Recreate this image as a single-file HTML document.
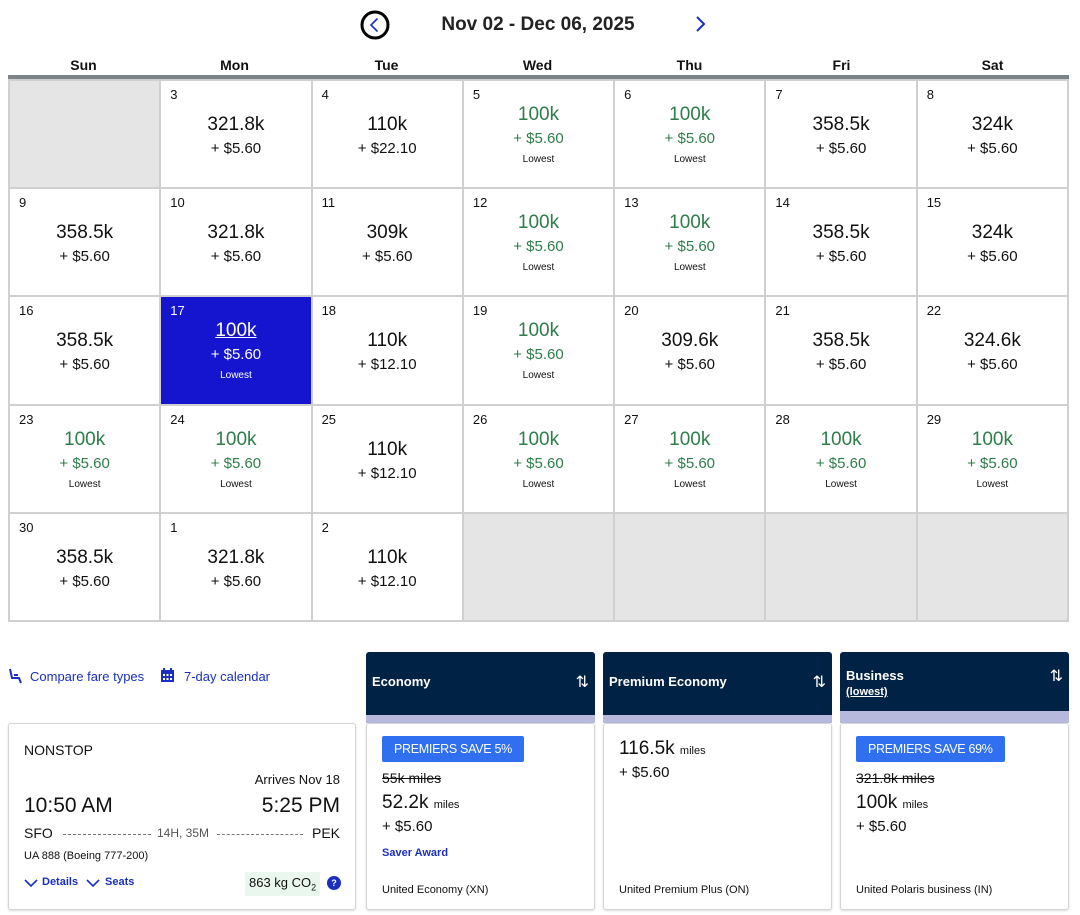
<!DOCTYPE html>
<html><head><meta charset="utf-8"><style>
*{box-sizing:border-box;margin:0;padding:0}
body{width:1080px;height:915px;background:#fff;font-family:"Liberation Sans",sans-serif;color:#111;position:relative;overflow:hidden}
.abs{position:absolute}
.title{left:0;width:1080px;top:14px;text-align:center;font-size:19px;font-weight:bold;color:#222}
.dow{top:57px;font-size:14px;font-weight:bold;text-align:center;width:151px}
.bar{left:8px;top:75px;width:1061px;height:4px;background:#7d8387}
.grid{left:8px;top:79px;width:1061px;height:543px;background:#d0d0d0;display:grid;grid-template-columns:repeat(7,1fr);grid-template-rows:repeat(5,1fr);gap:2px;padding:2px}
.c{background:#fff;position:relative;text-align:center}
.c.e{background:#e5e5e5}
.d{position:absolute;left:9px;top:6px;font-size:13px}
.p{position:absolute;left:0;right:0;top:33px;font-size:19px}
.f{position:absolute;left:0;right:0;top:59px;font-size:15px}
.g .p{top:23px;color:#2e7d4b}
.g .f{top:49px;color:#2e7d4b}
.l{position:absolute;left:0;right:0;top:73px;font-size:10px}
.s{background:#1515cf;color:#fff}
.s .p{color:#fff;text-decoration:underline}.s .f{color:#fff}
.link{top:669px;font-size:13px;color:#1a2fc2}
.card{border:1px solid #d5d5d5;border-radius:3px;box-shadow:0 1px 2px rgba(0,0,0,.15)}
.hd{background:#002244;color:#fff;font-weight:bold;font-size:13px;border-radius:3px 3px 0 0}
.band{background:#b7b9dc}
.badge{background:#2f6ff0;color:#fff;font-size:12.5px;padding:6px 12px;display:inline-block;border-radius:2px;letter-spacing:-0.3px}
.sm{font-size:11px}
</style></head><body>
<svg class="abs" style="left:359px;top:9px" width="32" height="32" viewBox="0 0 32 32"><circle cx="16" cy="16" r="13" fill="none" stroke="#000" stroke-width="3"/><path d="M18.5 9.5 L12 16 L18.5 22.5" fill="none" stroke="#1a2fc2" stroke-width="1.6"/></svg>
<div class="abs title" style="left:-2px">Nov 02 - Dec 06, 2025</div>
<svg class="abs" style="left:694px;top:15px" width="14" height="18" viewBox="0 0 14 18"><path d="M3 2 L10 9 L3 16" fill="none" stroke="#1a2fc2" stroke-width="2"/></svg>
<div class="abs dow" style="left:8px">Sun</div><div class="abs dow" style="left:159px">Mon</div><div class="abs dow" style="left:311px">Tue</div><div class="abs dow" style="left:462px">Wed</div><div class="abs dow" style="left:614px">Thu</div><div class="abs dow" style="left:766px">Fri</div><div class="abs dow" style="left:917px">Sat</div>
<div class="abs bar"></div>
<div class="abs grid">
<div class="c e"></div>
<div class="c"><span class="d">3</span><div class="p">321.8k</div><div class="f">+ $5.60</div></div>
<div class="c"><span class="d">4</span><div class="p">110k</div><div class="f">+ $22.10</div></div>
<div class="c g"><span class="d">5</span><div class="p">100k</div><div class="f">+ $5.60</div><div class="l">Lowest</div></div>
<div class="c g"><span class="d">6</span><div class="p">100k</div><div class="f">+ $5.60</div><div class="l">Lowest</div></div>
<div class="c"><span class="d">7</span><div class="p">358.5k</div><div class="f">+ $5.60</div></div>
<div class="c"><span class="d">8</span><div class="p">324k</div><div class="f">+ $5.60</div></div>
<div class="c"><span class="d">9</span><div class="p">358.5k</div><div class="f">+ $5.60</div></div>
<div class="c"><span class="d">10</span><div class="p">321.8k</div><div class="f">+ $5.60</div></div>
<div class="c"><span class="d">11</span><div class="p">309k</div><div class="f">+ $5.60</div></div>
<div class="c g"><span class="d">12</span><div class="p">100k</div><div class="f">+ $5.60</div><div class="l">Lowest</div></div>
<div class="c g"><span class="d">13</span><div class="p">100k</div><div class="f">+ $5.60</div><div class="l">Lowest</div></div>
<div class="c"><span class="d">14</span><div class="p">358.5k</div><div class="f">+ $5.60</div></div>
<div class="c"><span class="d">15</span><div class="p">324k</div><div class="f">+ $5.60</div></div>
<div class="c"><span class="d">16</span><div class="p">358.5k</div><div class="f">+ $5.60</div></div>
<div class="c g s"><span class="d">17</span><div class="p">100k</div><div class="f">+ $5.60</div><div class="l">Lowest</div></div>
<div class="c"><span class="d">18</span><div class="p">110k</div><div class="f">+ $12.10</div></div>
<div class="c g"><span class="d">19</span><div class="p">100k</div><div class="f">+ $5.60</div><div class="l">Lowest</div></div>
<div class="c"><span class="d">20</span><div class="p">309.6k</div><div class="f">+ $5.60</div></div>
<div class="c"><span class="d">21</span><div class="p">358.5k</div><div class="f">+ $5.60</div></div>
<div class="c"><span class="d">22</span><div class="p">324.6k</div><div class="f">+ $5.60</div></div>
<div class="c g"><span class="d">23</span><div class="p">100k</div><div class="f">+ $5.60</div><div class="l">Lowest</div></div>
<div class="c g"><span class="d">24</span><div class="p">100k</div><div class="f">+ $5.60</div><div class="l">Lowest</div></div>
<div class="c"><span class="d">25</span><div class="p">110k</div><div class="f">+ $12.10</div></div>
<div class="c g"><span class="d">26</span><div class="p">100k</div><div class="f">+ $5.60</div><div class="l">Lowest</div></div>
<div class="c g"><span class="d">27</span><div class="p">100k</div><div class="f">+ $5.60</div><div class="l">Lowest</div></div>
<div class="c g"><span class="d">28</span><div class="p">100k</div><div class="f">+ $5.60</div><div class="l">Lowest</div></div>
<div class="c g"><span class="d">29</span><div class="p">100k</div><div class="f">+ $5.60</div><div class="l">Lowest</div></div>
<div class="c"><span class="d">30</span><div class="p">358.5k</div><div class="f">+ $5.60</div></div>
<div class="c"><span class="d">1</span><div class="p">321.8k</div><div class="f">+ $5.60</div></div>
<div class="c"><span class="d">2</span><div class="p">110k</div><div class="f">+ $12.10</div></div>
<div class="c e"></div><div class="c e"></div><div class="c e"></div><div class="c e"></div>
</div>

<svg class="abs" style="left:7px;top:668px" width="16" height="16" viewBox="0 0 16 16"><path d="M3 1 L5 10 L12 10 L14 15 M7 7 L11 7" fill="none" stroke="#1a2fc2" stroke-width="2"/></svg>
<div class="abs link" style="left:30px">Compare fare types</div>
<svg class="abs" style="left:160px;top:667px" width="15" height="16" viewBox="0 0 15 16"><rect x="1" y="3" width="13" height="12" fill="#1a2fc2"/><rect x="3" y="1" width="2" height="3" fill="#1a2fc2"/><rect x="10" y="1" width="2" height="3" fill="#1a2fc2"/><g fill="#fff"><rect x="3" y="7" width="2" height="2"/><rect x="6.5" y="7" width="2" height="2"/><rect x="10" y="7" width="2" height="2"/><rect x="3" y="11" width="2" height="2"/><rect x="6.5" y="11" width="2" height="2"/><rect x="10" y="11" width="2" height="2"/></g></svg>
<div class="abs link" style="left:184px">7-day calendar</div>

<div class="abs card" style="left:8px;top:723px;width:348px;height:187px">
<div class="abs" style="left:15px;top:18px;font-size:14px">NONSTOP</div>
<div class="abs" style="right:15px;top:48px;font-size:13px">Arrives Nov 18</div>
<div class="abs" style="left:15px;top:70px;font-size:21px">10:50 AM</div>
<div class="abs" style="right:15px;top:70px;font-size:21px">5:25 PM</div>
<div class="abs" style="left:15px;top:101px;font-size:14px">SFO</div>
<div class="abs" style="left:54px;top:110px;width:88px;border-top:1px dashed #777"></div>
<div class="abs" style="left:148px;top:102px;font-size:12px;color:#555">14H, 35M</div>
<div class="abs" style="left:208px;top:110px;width:86px;border-top:1px dashed #777"></div>
<div class="abs" style="right:15px;top:101px;font-size:14px">PEK</div>
<div class="abs" style="left:15px;top:126px;font-size:11px">UA 888 (Boeing 777-200)</div>
<svg class="abs" style="left:15px;top:154px" width="14" height="10" viewBox="0 0 14 10"><path d="M1 2 L7 8 L13 2" fill="none" stroke="#1a2fc2" stroke-width="1.6"/></svg>
<div class="abs" style="left:33px;top:152px;font-size:11px;color:#1a2fc2;font-weight:bold">Details</div>
<svg class="abs" style="left:77px;top:154px" width="14" height="10" viewBox="0 0 14 10"><path d="M1 2 L7 8 L13 2" fill="none" stroke="#1a2fc2" stroke-width="1.6"/></svg>
<div class="abs" style="left:96px;top:152px;font-size:11px;color:#1a2fc2;font-weight:bold">Seats</div>
<div class="abs" style="left:236px;top:148px;background:#eaf7ee;padding:3px 4px;font-size:13px">863 kg CO<sub style="font-size:9px">2</sub></div>
<div class="abs" style="left:318px;top:152px;width:14px;height:14px;border-radius:50%;background:#1a2fc2;color:#fff;font-size:9px;text-align:center;line-height:14px;font-weight:bold">?</div>
</div>

<div class="abs hd" style="left:366px;top:652px;width:229px;height:63px"><div class="abs" style="left:6px;top:22px">Economy</div><div class="abs" style="right:6px;top:20px;font-size:16px;font-weight:normal">⇅</div></div>
<div class="abs band" style="left:366px;top:715px;width:229px;height:8px"></div>
<div class="abs card" style="left:366px;top:723px;width:229px;height:187px">
<div class="abs badge" style="left:15px;top:12px">PREMIERS SAVE 5%</div>
<div class="abs" style="left:15px;top:46px;font-size:14px;text-decoration:line-through">55k miles</div>
<div class="abs" style="left:15px;top:68px;font-size:19px">52.2k <span class="sm">miles</span></div>
<div class="abs" style="left:15px;top:94px;font-size:15px">+ $5.60</div>
<div class="abs" style="left:15px;top:123px;font-size:11px;color:#1a2fc2;font-weight:bold">Saver Award</div>
<div class="abs" style="left:15px;top:160px;font-size:11px">United Economy (XN)</div>
</div>
<div class="abs hd" style="left:603px;top:652px;width:229px;height:63px"><div class="abs" style="left:6px;top:22px">Premium Economy</div><div class="abs" style="right:6px;top:20px;font-size:16px;font-weight:normal">⇅</div></div>
<div class="abs band" style="left:603px;top:715px;width:229px;height:8px"></div>
<div class="abs card" style="left:603px;top:723px;width:229px;height:187px">
<div class="abs" style="left:15px;top:14px;font-size:19px">116.5k <span class="sm">miles</span></div>
<div class="abs" style="left:15px;top:40px;font-size:15px">+ $5.60</div>
<div class="abs" style="left:15px;top:160px;font-size:11px">United Premium Plus (ON)</div>
</div>
<div class="abs hd" style="left:840px;top:652px;width:229px;height:59px"><div class="abs" style="left:6px;top:16px">Business<br><span style="font-size:11px;text-decoration:underline">(lowest)</span></div><div class="abs" style="right:6px;top:14px;font-size:16px;font-weight:normal">⇅</div></div>
<div class="abs band" style="left:840px;top:711px;width:229px;height:12px"></div>
<div class="abs card" style="left:840px;top:723px;width:229px;height:187px">
<div class="abs badge" style="left:15px;top:12px">PREMIERS SAVE 69%</div>
<div class="abs" style="left:15px;top:46px;font-size:14px;text-decoration:line-through">321.8k miles</div>
<div class="abs" style="left:15px;top:68px;font-size:19px">100k <span class="sm">miles</span></div>
<div class="abs" style="left:15px;top:94px;font-size:15px">+ $5.60</div>
<div class="abs" style="left:15px;top:160px;font-size:11px">United Polaris business (IN)</div>
</div>
</body></html>
